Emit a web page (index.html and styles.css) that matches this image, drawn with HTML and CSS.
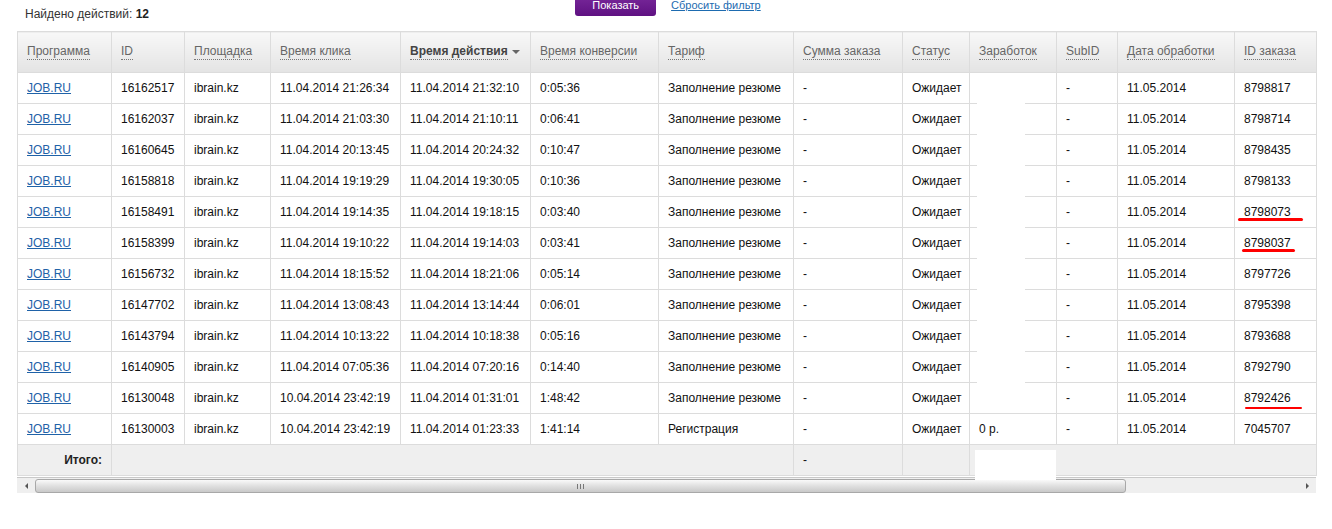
FILE: index.html
```html
<!DOCTYPE html>
<html lang="ru">
<head>
    <meta charset="UTF-8">
    <title>Действия</title>
    <link rel="stylesheet" href="styles.css">
</head>
<body>

    <div class="toolbar">
        <div class="found">Найдено действий: <b>12</b></div>
        <div class="actions">
            <button type="button" class="btn-show">Показать</button>
            <a href="#" class="reset">Сбросить фильтр</a>
        </div>
        <div></div>
    </div>

    <div class="grid-wrap">
        <table class="stats">
            <colgroup>
                <col style="width:94px"><col style="width:73px"><col style="width:86px"><col style="width:130px">
                <col style="width:130px"><col style="width:128px"><col style="width:135px"><col style="width:109px">
                <col style="width:67px"><col style="width:87px"><col style="width:61px"><col style="width:117px">
                <col style="width:82px">
            </colgroup>
            <thead>
                <tr>
                    <th><span>Программа</span></th>
                    <th><span>ID</span></th>
                    <th><span>Площадка</span></th>
                    <th><span>Время клика</span></th>
                    <th class="sorted"><span>Время действия</span></th>
                    <th><span>Время конверсии</span></th>
                    <th><span>Тариф</span></th>
                    <th><span>Сумма заказа</span></th>
                    <th><span>Статус</span></th>
                    <th><span>Заработок</span></th>
                    <th><span>SubID</span></th>
                    <th><span>Дата обработки</span></th>
                    <th><span>ID заказа</span></th>
                </tr>
            </thead>
            <tbody>
                <tr><td><a href="#">JOB.RU</a></td><td>16162517</td><td>ibrain.kz</td><td>11.04.2014 21:26:34</td><td>11.04.2014 21:32:10</td><td>0:05:36</td><td>Заполнение резюме</td><td>-</td><td>Ожидает</td><td></td><td>-</td><td>11.05.2014</td><td>8798817</td></tr>
                <tr><td><a href="#">JOB.RU</a></td><td>16162037</td><td>ibrain.kz</td><td>11.04.2014 21:03:30</td><td>11.04.2014 21:10:11</td><td>0:06:41</td><td>Заполнение резюме</td><td>-</td><td>Ожидает</td><td></td><td>-</td><td>11.05.2014</td><td>8798714</td></tr>
                <tr><td><a href="#">JOB.RU</a></td><td>16160645</td><td>ibrain.kz</td><td>11.04.2014 20:13:45</td><td>11.04.2014 20:24:32</td><td>0:10:47</td><td>Заполнение резюме</td><td>-</td><td>Ожидает</td><td></td><td>-</td><td>11.05.2014</td><td>8798435</td></tr>
                <tr><td><a href="#">JOB.RU</a></td><td>16158818</td><td>ibrain.kz</td><td>11.04.2014 19:19:29</td><td>11.04.2014 19:30:05</td><td>0:10:36</td><td>Заполнение резюме</td><td>-</td><td>Ожидает</td><td></td><td>-</td><td>11.05.2014</td><td>8798133</td></tr>
                <tr><td><a href="#">JOB.RU</a></td><td>16158491</td><td>ibrain.kz</td><td>11.04.2014 19:14:35</td><td>11.04.2014 19:18:15</td><td>0:03:40</td><td>Заполнение резюме</td><td>-</td><td>Ожидает</td><td></td><td>-</td><td>11.05.2014</td><td>8798073</td></tr>
                <tr><td><a href="#">JOB.RU</a></td><td>16158399</td><td>ibrain.kz</td><td>11.04.2014 19:10:22</td><td>11.04.2014 19:14:03</td><td>0:03:41</td><td>Заполнение резюме</td><td>-</td><td>Ожидает</td><td></td><td>-</td><td>11.05.2014</td><td>8798037</td></tr>
                <tr><td><a href="#">JOB.RU</a></td><td>16156732</td><td>ibrain.kz</td><td>11.04.2014 18:15:52</td><td>11.04.2014 18:21:06</td><td>0:05:14</td><td>Заполнение резюме</td><td>-</td><td>Ожидает</td><td></td><td>-</td><td>11.05.2014</td><td>8797726</td></tr>
                <tr><td><a href="#">JOB.RU</a></td><td>16147702</td><td>ibrain.kz</td><td>11.04.2014 13:08:43</td><td>11.04.2014 13:14:44</td><td>0:06:01</td><td>Заполнение резюме</td><td>-</td><td>Ожидает</td><td></td><td>-</td><td>11.05.2014</td><td>8795398</td></tr>
                <tr><td><a href="#">JOB.RU</a></td><td>16143794</td><td>ibrain.kz</td><td>11.04.2014 10:13:22</td><td>11.04.2014 10:18:38</td><td>0:05:16</td><td>Заполнение резюме</td><td>-</td><td>Ожидает</td><td></td><td>-</td><td>11.05.2014</td><td>8793688</td></tr>
                <tr><td><a href="#">JOB.RU</a></td><td>16140905</td><td>ibrain.kz</td><td>11.04.2014 07:05:36</td><td>11.04.2014 07:20:16</td><td>0:14:40</td><td>Заполнение резюме</td><td>-</td><td>Ожидает</td><td></td><td>-</td><td>11.05.2014</td><td>8792790</td></tr>
                <tr><td><a href="#">JOB.RU</a></td><td>16130048</td><td>ibrain.kz</td><td>10.04.2014 23:42:19</td><td>11.04.2014 01:31:01</td><td>1:48:42</td><td>Заполнение резюме</td><td>-</td><td>Ожидает</td><td></td><td>-</td><td>11.05.2014</td><td>8792426</td></tr>
                <tr><td><a href="#">JOB.RU</a></td><td>16130003</td><td>ibrain.kz</td><td>10.04.2014 23:42:19</td><td>11.04.2014 01:23:33</td><td>1:41:14</td><td>Регистрация</td><td>-</td><td>Ожидает</td><td>0 р.</td><td>-</td><td>11.05.2014</td><td>7045707</td></tr>
            </tbody>
            <tfoot>
                <tr>
                    <td class="total">Итого:</td>
                    <td colspan="6"></td>
                    <td>-</td>
                    <td></td>
                    <td colspan="4"></td>
                </tr>
            </tfoot>
        </table>

        <div class="hscroll">
            <span class="arrow arrow-left"></span>
            <div class="track">
                <div class="thumb"><span class="grip"></span></div>
            </div>
            <span class="arrow arrow-right"></span>
        </div>

        <!-- закрашено на скриншоте -->
        <div class="blank blank-earn"></div>
        <div class="blank blank-total"></div>

        <!-- пометки красным -->
        <div class="mark mark-1"></div>
        <div class="mark mark-2"></div>
        <div class="mark mark-3"></div>
    </div>

</body>
</html>
```

FILE: styles.css
```css
body {
    margin: 0;
    font-family: "Liberation Sans", Arial, sans-serif;
    font-size: 12px;
    color: #111;
    background: #fff;
}

.toolbar {
    display: grid;
    grid-template-columns: 1fr auto 1fr;
    align-items: start;
    height: 31px;
}

.found {
    margin-top: 7px;
    padding-left: 25px;
    line-height: 14px;
    color: #333;
}

.found b {
    color: #222;
}

.actions {
    display: flex;
    align-items: flex-start;
    padding-left: 4px;
}

.btn-show {
    margin-top: -6px;
    height: 22px;
    padding: 0 17px;
    border: none;
    border-radius: 0 0 3px 3px;
    background: linear-gradient(#7a2a9c, #5f1182);
    color: #fff;
    font-family: inherit;
    font-size: 11px;
    line-height: 22px;
}

.reset {
    margin: -1px 0 0 15px;
    font-size: 11px;
    line-height: 13px;
    color: #1d6bb0;
}

.grid-wrap {
    position: relative;
    width: 1299px;
    margin-left: 17px;
}

.stats {
    width: 1299px;
    table-layout: fixed;
    border-collapse: collapse;
}

.stats th, .stats td {
    border: 1px solid #dcdcdc;
    padding: 0 9px;
    text-align: left;
    white-space: nowrap;
    overflow: hidden;
}

.stats th {
    height: 40px;
    background: linear-gradient(#f8f8f8, #e4e4e4);
    font-weight: normal;
    color: #666;
}

.stats th span {
    display: inline-block;
    line-height: 15px;
    border-bottom: 1px dotted #777;
}

.stats th.sorted span {
    font-weight: bold;
    color: #444;
}

.stats th.sorted::after {
    content: "";
    display: inline-block;
    margin-left: 4px;
    vertical-align: middle;
    border-left: 4px solid transparent;
    border-right: 4px solid transparent;
    border-top: 4px solid #666;
}

.stats td {
    height: 30px;
}

.stats td a {
    color: #1f62a8;
}

.stats tfoot td {
    background: #efefef;
}

.stats td.total {
    text-align: right;
    font-weight: bold;
    color: #222;
}

.hscroll {
    display: flex;
    height: 15px;
    margin-top: 1px;
    border-top: 1px solid #c9c9c9;
    background: #efefef;
}

.arrow {
    width: 18px;
    display: flex;
    align-items: center;
    justify-content: center;
}

.arrow::before {
    content: "";
    border-top: 3px solid transparent;
    border-bottom: 3px solid transparent;
}

.arrow-left::before {
    border-right: 3px solid #555;
}

.arrow-right::before {
    border-left: 3px solid #555;
}

.track {
    flex: 1;
    padding-top: 1px;
}

.thumb {
    width: 1089px;
    height: 12px;
    border: 1px solid #a8a8a8;
    border-radius: 3px;
    background: linear-gradient(#fafafa, #e2e2e2 45%, #c9c9c9);
    display: flex;
    align-items: center;
    justify-content: center;
}

.grip {
    width: 7px;
    height: 5px;
    background: repeating-linear-gradient(90deg, #777 0, #777 1px, transparent 1px, transparent 3px);
}

.blank {
    position: absolute;
    background: #fff;
}

.blank-earn {
    left: 960px;
    top: 43px;
    width: 48px;
    height: 338px;
}

.blank-total {
    left: 958px;
    top: 419px;
    width: 81px;
    height: 30px;
}

.mark {
    position: absolute;
    background: #f00;
    border-radius: 2px;
}

.mark-1 {
    left: 1221px;
    top: 187px;
    width: 65px;
    height: 3px;
}

.mark-2 {
    left: 1225px;
    top: 218px;
    width: 53px;
    height: 3px;
}

.mark-3 {
    left: 1228px;
    top: 376px;
    width: 57px;
    height: 1.5px;
}
```
